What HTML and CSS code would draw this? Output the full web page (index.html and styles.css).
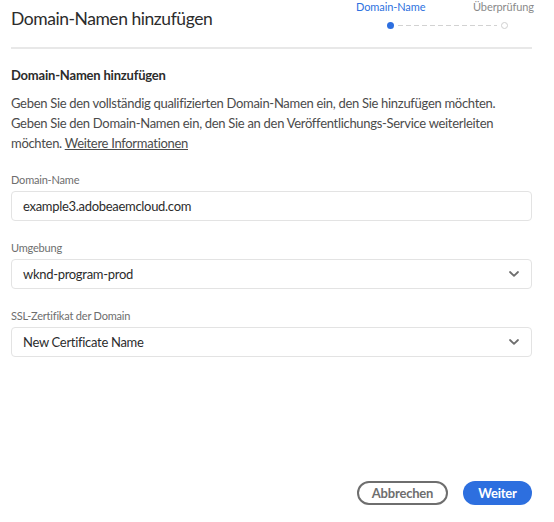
FILE: index.html
```html
<!DOCTYPE html>
<html lang="de">
<head>
<meta charset="utf-8">
<title>Domain-Namen hinzufügen</title>
<link rel="stylesheet" href="styles.css">
</head>
<body>
<div class="dialog">
  <header class="header">
    <h1 class="title">Domain-Namen hinzufügen</h1>
    <div class="stepper">
      <div class="step-labels">
        <span class="step-label active">Domain-Name</span>
        <span class="step-label">Überprüfung</span>
      </div>
      <div class="track">
        <span class="dot filled"></span>
        <span class="dashes"></span>
        <span class="dot empty"></span>
      </div>
    </div>
  </header>

  <section class="content">
    <h2 class="heading">Domain-Namen hinzufügen</h2>
    <p class="desc">Geben Sie den vollständig qualifizierten Domain-Namen ein, den Sie hinzufügen möchten. Geben Sie den Domain-Namen ein, den Sie an den Veröffentlichungs-Service weiterleiten möchten. <a class="link" href="#">Weitere Informationen</a></p>

    <div class="field">
      <label class="label">Domain-Name</label>
      <div class="box">example3.adobeaemcloud.com</div>
    </div>
    <div class="field">
      <label class="label">Umgebung</label>
      <div class="box select">
        <span>wknd-program-prod</span>
        <svg class="chev" width="10" height="6" viewBox="0 0 10 6"><path d="M1 1 L5 4.8 L9 1" fill="none" stroke="#6e6e6e" stroke-width="1.8" stroke-linecap="round" stroke-linejoin="round"/></svg>
      </div>
    </div>
    <div class="field">
      <label class="label">SSL-Zertifikat der Domain</label>
      <div class="box select">
        <span>New Certificate Name</span>
        <svg class="chev" width="10" height="6" viewBox="0 0 10 6"><path d="M1 1 L5 4.8 L9 1" fill="none" stroke="#6e6e6e" stroke-width="1.8" stroke-linecap="round" stroke-linejoin="round"/></svg>
      </div>
    </div>
  </section>

  <footer class="footer">
    <button class="btn secondary">Abbrechen</button>
    <button class="btn primary">Weiter</button>
  </footer>
</div>
</body>
</html>
```

FILE: styles.css
```css
* { box-sizing: border-box; }
html, body { margin: 0; padding: 0; background: #fff; }
body { font-family: Lato, "Noto Sans", sans-serif; color: #4b4b4b; }

.dialog {
  width: 554px;
  height: 522px;
  padding: 0 22px 0 11px;
  display: flex;
  flex-direction: column;
}

.header {
  display: flex;
  justify-content: space-between;
  height: 49px;
  border-bottom: 2px solid #e8e8e8;
}
.title {
  margin: 7px 0 0 0;
  font-size: 17.5px;
  line-height: 24px;
  font-weight: 400;
  letter-spacing: -0.45px;
  color: #2c2c2c;
}

.stepper {
  width: 178px;
  margin-right: -2px;
  display: flex;
  flex-direction: column;
}
.step-labels {
  display: flex;
  justify-content: space-between;
  font-size: 11px;
  line-height: 14px;
  letter-spacing: -0.1px;
}
.step-label { color: #8a8a8a; }
.step-label.active { color: #2d72e0; }
.track {
  display: flex;
  align-items: center;
  margin-top: 8px;
  padding: 0 26px 0 31px;
}
.dot {
  width: 7px;
  height: 7px;
  border-radius: 50%;
  flex: none;
}
.dot.filled { background: #2d6fe0; }
.dot.empty { border: 1px solid #cfcfcf; background: #fff; }
.dashes {
  flex: 1;
  height: 1.5px;
  margin: 0 4px;
  background: repeating-linear-gradient(90deg, #d2d2d2 0 5px, transparent 5px 8px);
}

.content { display: flex; flex-direction: column; }
.heading {
  margin: 17px 0 9px 0;
  font-size: 13px;
  line-height: 18px;
  font-weight: 700;
  letter-spacing: -0.2px;
  color: #2c2c2c;
}
.desc {
  margin: 0;
  font-size: 13px;
  line-height: 20px;
  letter-spacing: -0.3px;
  color: #4b4b4b;
}
.link { color: #4b4b4b; text-decoration: underline; }

.field { display: flex; flex-direction: column; margin-top: 20px; }
.label {
  font-size: 11px;
  line-height: 14px;
  letter-spacing: -0.2px;
  color: #6e6e6e;
  margin-bottom: 4px;
}
.box {
  height: 30px;
  border: 1px solid #e3e3e3;
  border-radius: 4px;
  padding: 0 11px;
  display: flex;
  align-items: center;
  font-size: 13px;
  letter-spacing: -0.3px;
  color: #2c2c2c;
}
.select { justify-content: space-between; padding-right: 12px; }
.chev { flex: none; }

.footer {
  margin-top: auto;
  padding-bottom: 17px;
  display: flex;
  justify-content: flex-end;
  gap: 15px;
}
.btn {
  height: 24px;
  border-radius: 12px;
  font-family: Lato, "Noto Sans", sans-serif;
  font-size: 13px;
  font-weight: 700;
  letter-spacing: -0.2px;
  padding: 0;
  cursor: pointer;
}
.secondary {
  width: 91px;
  border: 2px solid #6e6e6e;
  background: #fff;
  color: #6e6e6e;
}
.primary {
  width: 69px;
  border: none;
  background: #2d6fdf;
  color: #fff;
}
```
